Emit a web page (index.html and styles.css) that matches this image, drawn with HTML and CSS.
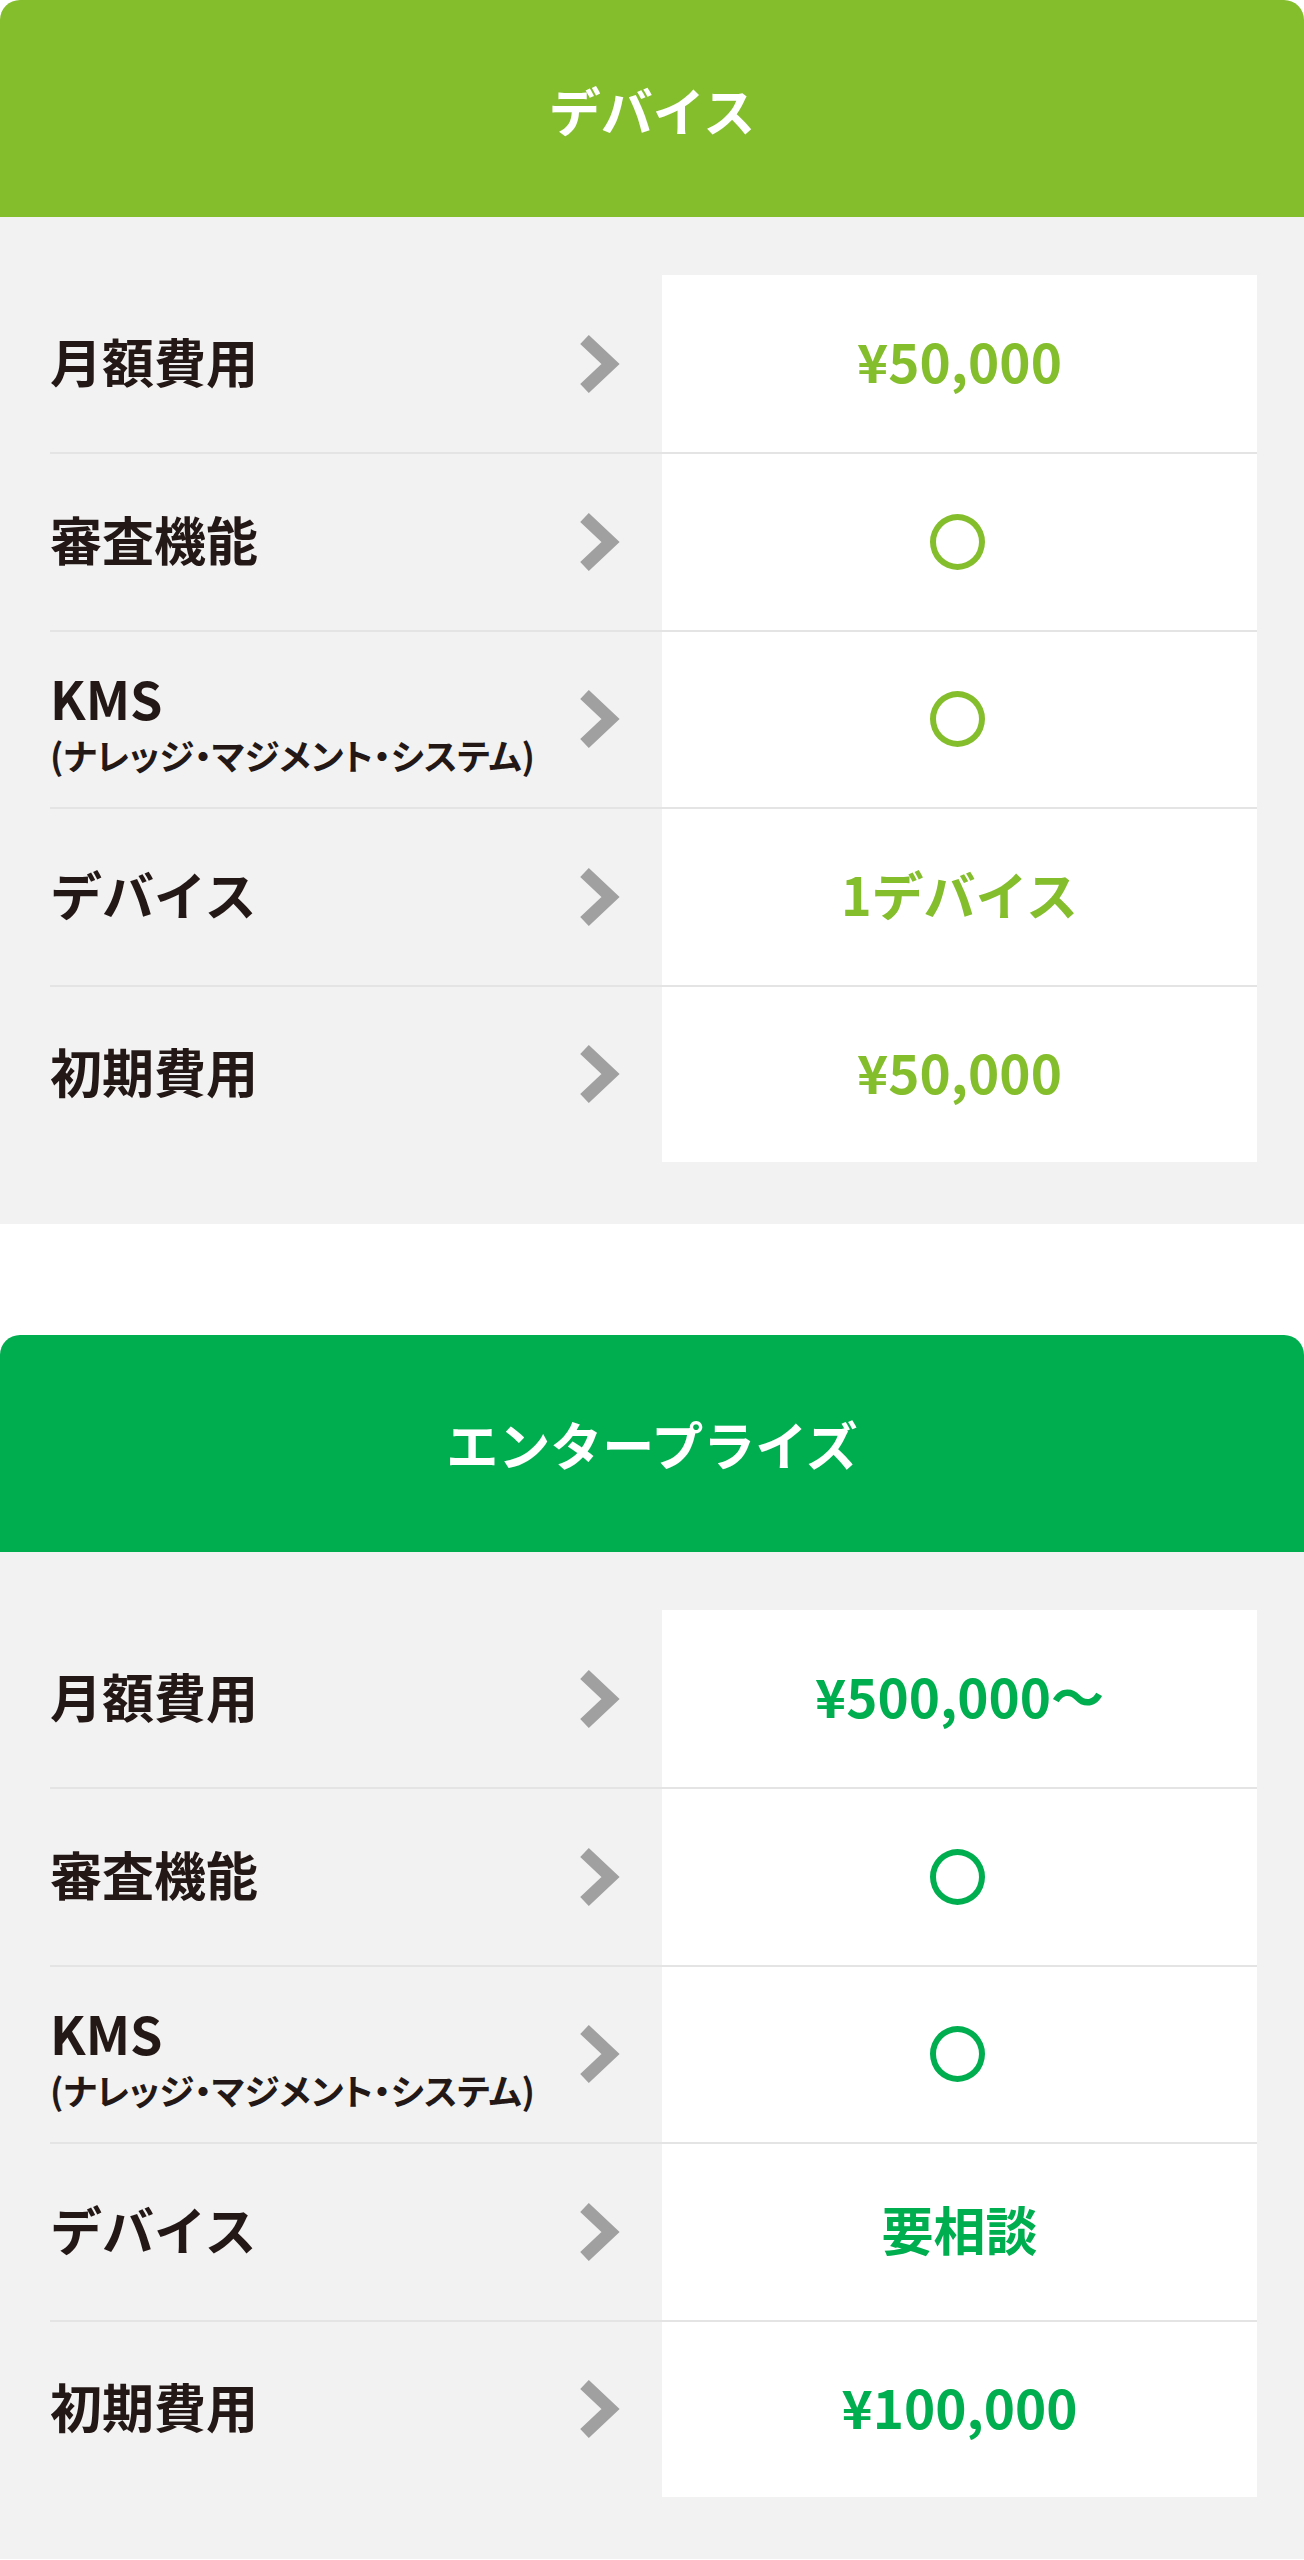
FILE: index.html
```html
<!DOCTYPE html>
<html lang="ja">
<head>
<meta charset="utf-8">
<title>プラン比較</title>
<link rel="stylesheet" href="styles.css">
</head>
<body>
<section class="plan plan-device">
  <h2 class="plan-head">デバイス</h2>
  <div class="plan-body">
    <div class="row">
      <div class="label">月額費用</div>
      <svg class="arrow" viewBox="0 0 42 56" aria-hidden="true"><polyline points="6.5,3.5 32.5,28 6.5,52.5"/></svg>
      <div class="value num">¥50,000</div>
    </div>
    <div class="row">
      <div class="label">審査機能</div>
      <svg class="arrow" viewBox="0 0 42 56" aria-hidden="true"><polyline points="6.5,3.5 32.5,28 6.5,52.5"/></svg>
      <div class="value"><span class="circle" aria-label="○"></span></div>
    </div>
    <div class="row">
      <div class="label stacked"><span class="main">KMS</span><span class="sub">(ナレッジ・マジメント・システム)</span></div>
      <svg class="arrow" viewBox="0 0 42 56" aria-hidden="true"><polyline points="6.5,3.5 32.5,28 6.5,52.5"/></svg>
      <div class="value"><span class="circle" aria-label="○"></span></div>
    </div>
    <div class="row">
      <div class="label">デバイス</div>
      <svg class="arrow" viewBox="0 0 42 56" aria-hidden="true"><polyline points="6.5,3.5 32.5,28 6.5,52.5"/></svg>
      <div class="value">1デバイス</div>
    </div>
    <div class="row">
      <div class="label">初期費用</div>
      <svg class="arrow" viewBox="0 0 42 56" aria-hidden="true"><polyline points="6.5,3.5 32.5,28 6.5,52.5"/></svg>
      <div class="value num">¥50,000</div>
    </div>
  </div>
</section>

<section class="plan plan-enterprise">
  <h2 class="plan-head">エンタープライズ</h2>
  <div class="plan-body">
    <div class="row">
      <div class="label">月額費用</div>
      <svg class="arrow" viewBox="0 0 42 56" aria-hidden="true"><polyline points="6.5,3.5 32.5,28 6.5,52.5"/></svg>
      <div class="value num">¥500,000〜</div>
    </div>
    <div class="row">
      <div class="label">審査機能</div>
      <svg class="arrow" viewBox="0 0 42 56" aria-hidden="true"><polyline points="6.5,3.5 32.5,28 6.5,52.5"/></svg>
      <div class="value"><span class="circle" aria-label="○"></span></div>
    </div>
    <div class="row">
      <div class="label stacked"><span class="main">KMS</span><span class="sub">(ナレッジ・マジメント・システム)</span></div>
      <svg class="arrow" viewBox="0 0 42 56" aria-hidden="true"><polyline points="6.5,3.5 32.5,28 6.5,52.5"/></svg>
      <div class="value"><span class="circle" aria-label="○"></span></div>
    </div>
    <div class="row">
      <div class="label">デバイス</div>
      <svg class="arrow" viewBox="0 0 42 56" aria-hidden="true"><polyline points="6.5,3.5 32.5,28 6.5,52.5"/></svg>
      <div class="value">要相談</div>
    </div>
    <div class="row">
      <div class="label">初期費用</div>
      <svg class="arrow" viewBox="0 0 42 56" aria-hidden="true"><polyline points="6.5,3.5 32.5,28 6.5,52.5"/></svg>
      <div class="value num">¥100,000</div>
    </div>
  </div>
</section>
</body>
</html>
```

FILE: styles.css
```css
* { box-sizing: border-box; }

body {
  margin: 0;
  background: #ffffff;
  font-family: "Noto Sans CJK JP", "Noto Sans", sans-serif;
  color: #231815;
}

.plan {
  --accent: #84be2d;
}
.plan-enterprise {
  --accent: #00ae50;
  margin-top: 111px;
}

.plan-head {
  margin: 0;
  height: 217px;
  display: flex;
  align-items: center;
  justify-content: center;
  padding-top: 2px;
  background: var(--accent);
  border-radius: 20px 20px 0 0;
  color: #ffffff;
  font-size: 52px;
  font-weight: 700;
  line-height: 1;
}

.plan-body {
  background: #f2f2f2;
  padding: 58px 47px 62px 50px;
  display: grid;
  grid-template-rows: repeat(5, 177.4px);
}

.row {
  display: flex;
  align-items: stretch;
  border-top: 2px solid rgba(0, 0, 0, 0.055);
}
.row:first-child {
  border-top: none;
}

.label {
  flex: 1;
  display: flex;
  flex-direction: column;
  justify-content: center;
  font-size: 52px;
  font-weight: 700;
  line-height: 1;
  padding-bottom: 6px;
}
.label.stacked {
  padding-bottom: 0;
  padding-top: 6px;
}
.label .main {
  display: block;
  line-height: 1;
}
.label .sub {
  display: block;
  margin-top: 13px;
  font-size: 35.5px;
  line-height: 1;
  font-feature-settings: "palt";
}

.arrow {
  align-self: center;
  width: 42px;
  height: 56px;
  margin-right: 42px;
  overflow: visible;
}
.arrow polyline {
  fill: none;
  stroke: #a0a0a0;
  stroke-width: 12.5;
  stroke-linejoin: miter;
  stroke-linecap: butt;
}

.value {
  width: 595px;
  background: #ffffff;
  display: flex;
  align-items: center;
  justify-content: center;
  color: var(--accent);
  font-size: 52px;
  font-weight: 700;
  line-height: 1;
  padding-bottom: 6px;
}
.value.num {
  font-size: 53px;
}

.circle {
  display: block;
  width: 55px;
  height: 56px;
  margin-top: 6px;
  margin-right: 4px;
  border: 6px solid var(--accent);
  border-radius: 50%;
}
```
